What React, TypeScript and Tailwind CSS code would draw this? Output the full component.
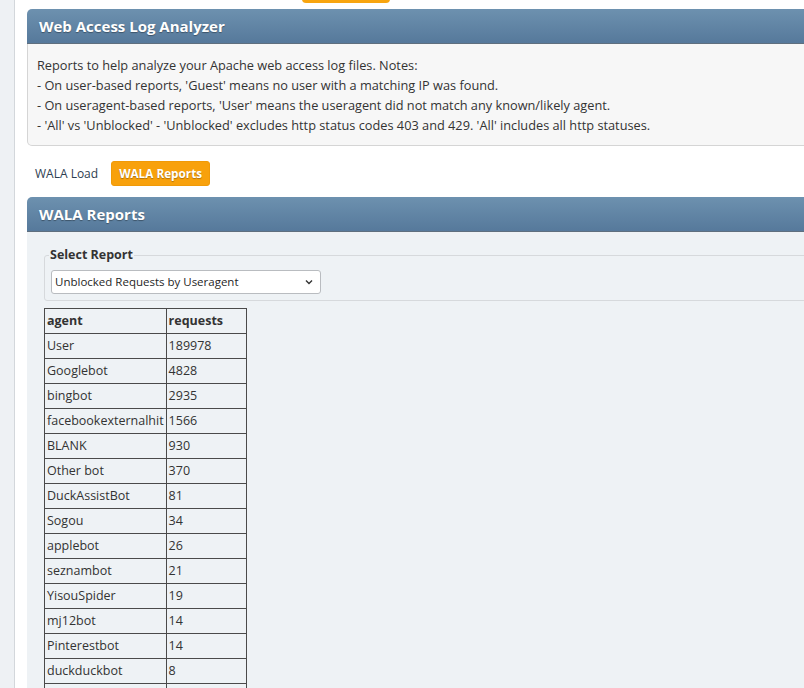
const NOTES = [
  'Reports to help analyze your Apache web access log files. Notes:',
  "- On user-based reports, 'Guest' means no user with a matching IP was found.",
  "- On useragent-based reports, 'User' means the useragent did not match any known/likely agent.",
  "- 'All' vs 'Unblocked' - 'Unblocked' excludes http status codes 403 and 429. 'All' includes all http statuses.",
]

const ROWS: [string, string][] = [
  ['User', '189978'],
  ['Googlebot', '4828'],
  ['bingbot', '2935'],
  ['facebookexternalhit', '1566'],
  ['BLANK', '930'],
  ['Other bot', '370'],
  ['DuckAssistBot', '81'],
  ['Sogou', '34'],
  ['applebot', '26'],
  ['seznambot', '21'],
  ['YisouSpider', '19'],
  ['mj12bot', '14'],
  ['Pinterestbot', '14'],
  ['duckduckbot', '8'],
]

function PanelHeader({ title }: { title: string }) {
  return (
    <div className="h-[35px] flex items-center pl-[12px] rounded-tl-[5px] bg-gradient-to-b from-[#6d91af] to-[#56799b] border-b border-[#5f6f7e]">
      <span className="text-white font-bold text-[15px] [text-shadow:0_1px_1px_rgba(0,0,0,0.35)]">
        {title}
      </span>
    </div>
  )
}

export default function App() {
  return (
    <div
      className="h-[688px] w-[804px] overflow-hidden flex bg-white text-[#333]"
      style={{ fontFamily: '"Open Sans", "Noto Sans", sans-serif' }}
    >
      {/* left gutter */}
      <div className="w-[15px] shrink-0 bg-[#eef1f4] border-r border-[#d3d7db]" />

      <div className="flex-1 min-w-0 pl-[12px]">
        {/* cut-off button at the top */}
        <div className="h-[25px] mt-[-22px] ml-[275px] w-[88px] rounded-[4px] bg-[#f8a50f]" />

        {/* Web Access Log Analyzer */}
        <div className="mt-[6px] w-[900px]">
          <PanelHeader title="Web Access Log Analyzer" />
          <div className="bg-[#f7f7f7] border border-t-0 border-[#d5d5d5] rounded-bl-[5px] pl-[9px] pt-[11px] pb-[10px]">
            {NOTES.map((line) => (
              <div key={line} className="text-[12.75px] leading-[20px] text-[#333]">
                {line}
              </div>
            ))}
          </div>
        </div>

        {/* tabs */}
        <div className="flex items-center mt-[15px] h-[25px]">
          <span className="ml-[8px] text-[12px] text-[#2d3e50]">WALA Load</span>
          <span className="ml-[13px] h-[25px] px-[7px] flex items-center rounded-[3px] bg-[#f8a10c] border border-[#f09a08] text-white font-bold text-[11.75px] [text-shadow:0_1px_1px_rgba(0,0,0,0.3)]">
            WALA Reports
          </span>
        </div>

        {/* WALA Reports */}
        <div className="mt-[11px] w-[900px]">
          <PanelHeader title="WALA Reports" />
          <div className="bg-[#eef2f5] pl-[17px] pt-[14px] h-[600px]">
            <fieldset className="border border-[#d6d9dc] rounded-[3px] pl-[6px] pb-[6px]">
              <legend className="ml-[-2px] px-[1px] font-bold text-[12.5px] text-[#333] leading-[18px]">
                Select Report
              </legend>
              <div className="mt-[6px] w-[270px] h-[24px] bg-white border border-[#b9bcc0] rounded-[3px] flex items-center justify-between pl-[3px] pr-[6px]">
                <span className="text-[11.5px] text-[#1f1f1f]">Unblocked Requests by Useragent</span>
                <svg width="10" height="10" viewBox="0 0 10 10" fill="none" stroke="#333" strokeWidth="1.4">
                  <path d="M2 3.5 L5 6.5 L8 3.5" />
                </svg>
              </div>
            </fieldset>

            <table className="mt-[7px] border-collapse text-[12.5px] text-[#333]">
              <thead>
                <tr className="h-[25px]">
                  <th className="w-[121px] border border-[#4a4a4a] text-left font-bold px-[2px]">agent</th>
                  <th className="w-[80px] border border-[#4a4a4a] text-left font-bold px-[2px]">requests</th>
                </tr>
              </thead>
              <tbody>
                {ROWS.map(([agent, count]) => (
                  <tr key={agent} className="h-[25px]">
                    <td className="border border-[#4a4a4a] px-[2px] whitespace-nowrap">{agent}</td>
                    <td className="border border-[#4a4a4a] px-[2px]">{count}</td>
                  </tr>
                ))}
                <tr className="h-[25px]">
                  <td className="border border-[#4a4a4a] px-[2px]" />
                  <td className="border border-[#4a4a4a] px-[2px]" />
                </tr>
              </tbody>
            </table>
          </div>
        </div>
      </div>
    </div>
  )
}
